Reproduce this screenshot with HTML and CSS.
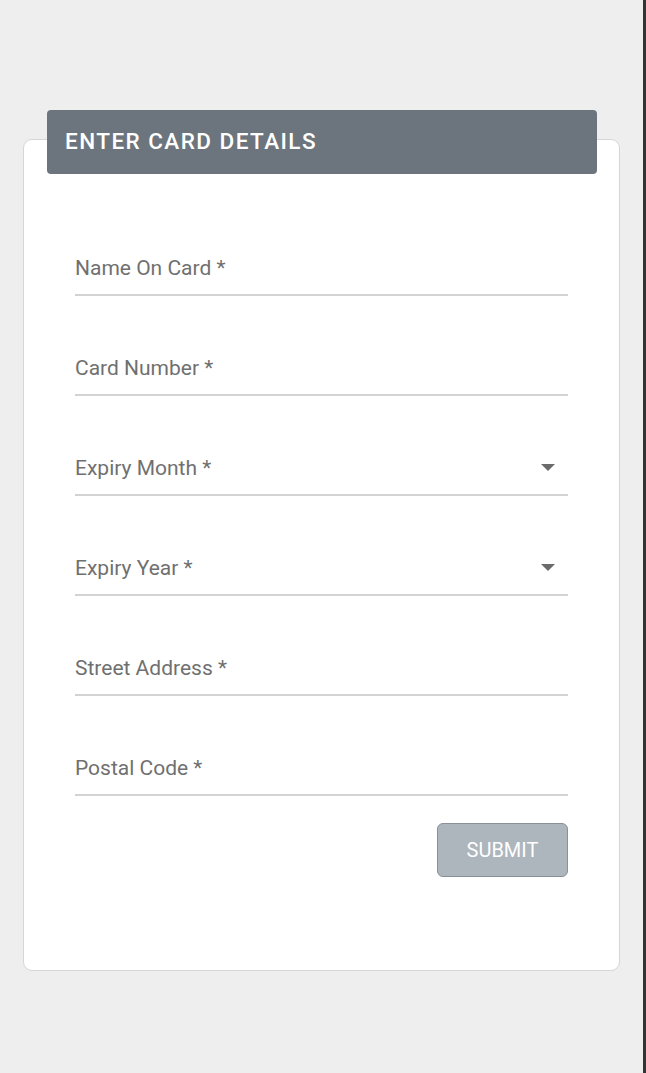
FILE: index.html
```html
<!DOCTYPE html>
<html>
<head>
<meta charset="utf-8">
<link rel="stylesheet" href="styles.css">
</head>
<body>
<div class="page">
  <div class="card">
    <div class="card-header">ENTER CARD DETAILS</div>
    <div class="panel">
      <form class="form">
        <div class="field"><span class="label">Name On Card *</span></div>
        <div class="field"><span class="label">Card Number *</span></div>
        <div class="field"><span class="label">Expiry Month *</span><span class="arrow"></span></div>
        <div class="field"><span class="label">Expiry Year *</span><span class="arrow"></span></div>
        <div class="field"><span class="label">Street Address *</span></div>
        <div class="field"><span class="label">Postal Code *</span></div>
        <div class="actions"><button type="button" class="submit">SUBMIT</button></div>
      </form>
    </div>
  </div>
</div>
<div class="edge"></div>
</body>
</html>
```
FILE: styles.css
```css
html, body {
  margin: 0;
  padding: 0;
  height: 100%;
}
body {
  background: #eeeeee;
  font-family: Roboto, "Noto Sans", sans-serif;
  display: flex;
}
.page {
  flex: 1;
  padding: 139px 23px 0 23px;
}
.edge {
  width: 3px;
  background: #333333;
}
.card {
  background: #ffffff;
  border: 1px solid #d6d6d6;
  border-radius: 9px;
  height: 832px;
  box-sizing: border-box;
  padding: 0 15px;
}
.card-header {
  background: #6c757d;
  color: #ffffff;
  margin: -30px 7px 0 8px;
  height: 64px;
  border-radius: 4px;
  box-sizing: border-box;
  padding: 18px 0 0 18px;
  font-size: 22.5px;
  font-weight: 500;
  letter-spacing: 1.45px;
  line-height: 26px;
}
.panel {
  margin-top: 23px;
  background: #ffffff;
  height: 704px;
  border-radius: 4px;
  box-shadow: 0 0 1px rgba(0,0,0,0.05);
  padding: 36px 36px 0 36px;
  box-sizing: border-box;
}
.form {
  display: flex;
  flex-direction: column;
}
.field {
  height: 100px;
  box-sizing: border-box;
  display: flex;
  align-items: flex-end;
  justify-content: space-between;
  border-bottom: 2px solid #d3d3d3;
  padding: 0 13px 14px 0;
}
.field:first-child {
  height: 63px;
}
.label {
  color: #707070;
  font-size: 21px;
  line-height: 24px;
}
.arrow {
  width: 0;
  height: 0;
  border-left: 7px solid transparent;
  border-right: 7px solid transparent;
  border-top: 7px solid #6b6b6b;
  margin-bottom: 9px;
}
.actions {
  display: flex;
  justify-content: flex-end;
  margin-top: 27px;
}
.submit {
  width: 131px;
  height: 54px;
  background: #adb5bd;
  border: 1px solid #8a9097;
  border-radius: 6px;
  color: #ffffff;
  font-family: Roboto, sans-serif;
  font-size: 20px;
  padding: 0;
}
```
